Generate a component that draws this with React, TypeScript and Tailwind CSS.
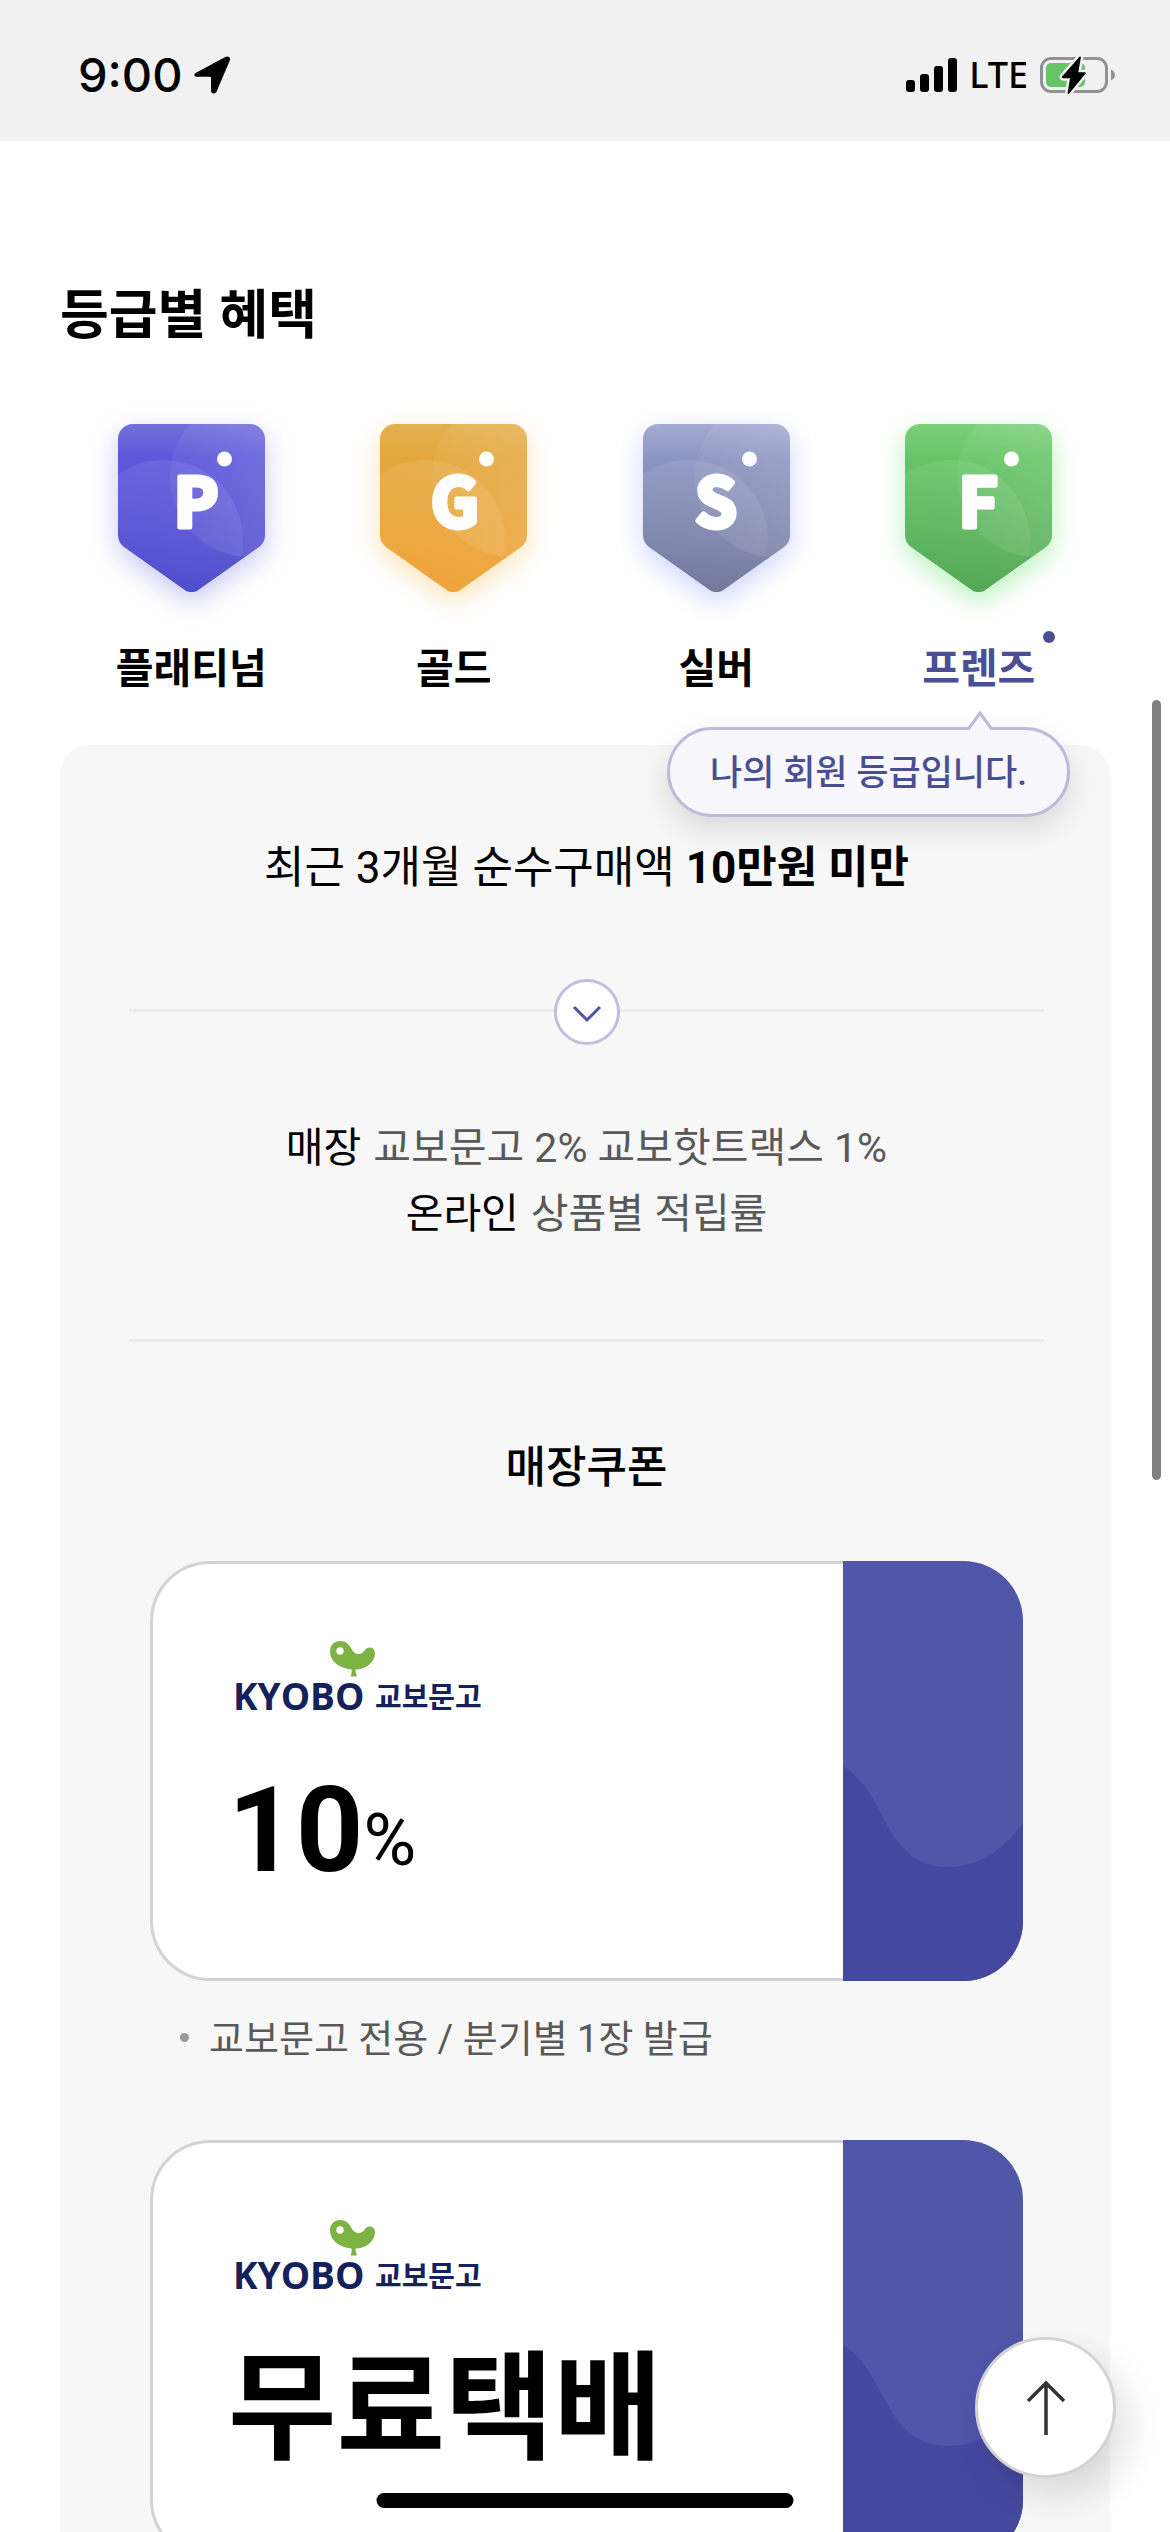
import { useState } from "react";

interface Grade {
  id: string;
  letter: string;
  letterX: number;
  name: string;
  top: string;
  mid: string;
  bottom: string;
  glow: string;
}

const GRADES: Grade[] = [
  {
    id: "platinum",
    letter: "P",
    letterX: 78,
    name: "플래티넘",
    top: "#746fda",
    mid: "#5d57da",
    bottom: "#4f4ccd",
    glow: "drop-shadow-[0_9px_13px_rgba(91,86,216,0.32)]",
  },
  {
    id: "gold",
    letter: "G",
    letterX: 75,
    name: "골드",
    top: "#e2b14f",
    mid: "#e4a73c",
    bottom: "#f0a338",
    glow: "drop-shadow-[0_9px_13px_rgba(240,180,60,0.36)]",
  },
  {
    id: "silver",
    letter: "S",
    letterX: 73,
    name: "실버",
    top: "#a4abd1",
    mid: "#8c95c2",
    bottom: "#72779b",
    glow: "drop-shadow-[0_9px_13px_rgba(120,140,250,0.36)]",
  },
  {
    id: "friends",
    letter: "F",
    letterX: 73,
    name: "프렌즈",
    top: "#7dd07c",
    mid: "#65c565",
    bottom: "#52a653",
    glow: "drop-shadow-[0_9px_13px_rgba(90,220,100,0.42)]",
  },
];

const MY_GRADE = "friends";

const COUPONS = [
  { id: "rate", value: "10", unit: "%", note: "교보문고 전용 / 분기별 1장 발급" },
  { id: "delivery", value: "무료택배", unit: "", note: "" },
];

function StatusBar() {
  return (
    <header className="flex h-[141px] shrink-0 items-center justify-between bg-[#f1f1f1] pr-[54px] pl-[78px] text-black">
      <div className="flex items-center gap-[11px] pt-2">
        <span className="font-['Inter',sans-serif] text-[47px] leading-[60px] font-medium">9:00</span>
        <svg width="37" height="38" viewBox="0 0 37 38" aria-hidden>
          <path
            d="M3 16.300 31.300 1.100C34.500-.5 37 1.700 35.700 4.700L22.600 35.500C21.300 38.600 17 38 17 34.600V21.600C17 21 16.800 20.800 16.200 20.800H3.600C-.5 20.800-.9 18 3 16.300Z"
            fill="#000"
          />
        </svg>
      </div>

      <div className="flex items-center gap-3 pt-2">
        <svg width="51" height="34" viewBox="0 0 51 34" aria-hidden>
          <rect x="0" y="22" width="9" height="12" rx="3" />
          <rect x="14" y="16" width="9" height="18" rx="3" />
          <rect x="28" y="8" width="9" height="26" rx="3" />
          <rect x="42" y="0" width="9" height="34" rx="3" />
        </svg>
        <span className="font-['Noto_Sans',sans-serif] text-[36px] leading-[60px] font-medium">LTE</span>
        <svg width="76" height="38" viewBox="0 0 76 38" aria-hidden>
          <rect x="1.500" y="2.500" width="65" height="33" rx="9.500" fill="none" stroke="#929294" strokeWidth="3" />
          <path d="M71 13.500C73.500 14.500 75 16.500 75 19S73.500 23.500 71 24.500Z" fill="#929294" />
          <rect x="6" y="7" width="39" height="24" rx="5" fill="#67c466" />
          <path
            d="M39.500 .8 22.300 20.300C21.500 21.300 22 22.200 23 22.200H30L27.600 36.800C27.500 37.900 28.400 38.300 29.200 37.400L45.500 17.800C46.200 16.900 45.800 16.200 44.700 16.200H38.300L40.800 2C41 .6 40.300 0 39.500 .8Z"
            fill="#000"
            stroke="#f1f1f1"
            strokeWidth="5"
            paintOrder="stroke"
          />
        </svg>
      </div>
    </header>
  );
}

function GradeBadge({ grade }: { grade: Grade }) {
  const fill = `fill-${grade.id}`;
  const shine = `shine-${grade.id}`;
  const side = `side-${grade.id}`;
  const clip = `clip-${grade.id}`;

  return (
    <svg width="147" height="168" viewBox="0 0 147 168" className={grade.glow} aria-hidden>
      <defs>
        <linearGradient id={fill} x1="0" y1="0" x2="0" y2="1">
          <stop offset="0" stopColor={grade.top} />
          <stop offset="0.2" stopColor={grade.mid} />
          <stop offset="1" stopColor={grade.bottom} />
        </linearGradient>
        <linearGradient id={shine} x1="0.6" y1="0" x2="0.3" y2="1">
          <stop offset="0" stopColor="#fff" stopOpacity="0.09" />
          <stop offset="0.45" stopColor="#fff" stopOpacity="0.05" />
          <stop offset="0.8" stopColor="#fff" stopOpacity="0" />
        </linearGradient>
        <linearGradient id={side} x1="0" y1="0" x2="0.6" y2="0">
          <stop offset="0" stopColor="#fff" stopOpacity="0.05" />
          <stop offset="1" stopColor="#fff" stopOpacity="0.13" />
        </linearGradient>
        <clipPath id={clip}>
          <path d="M15 0H132C140.300 0 147 6.700 147 15V111C147 116 145 120 141 123L81 165.500C76.500 169 70.500 169 66 165.500L6 123C2 120 0 116 0 111V15C0 6.700 6.700 0 15 0Z" />
        </clipPath>
      </defs>
      <g clipPath={`url(#${clip})`}>
        <rect width="147" height="168" fill={`url(#${fill})`} />
        <circle cx="45" cy="116" r="80" fill={`url(#${shine})`} />
        <circle cx="132" cy="53" r="80" fill={`url(#${side})`} />
      </g>
      <circle cx="106.500" cy="35" r="7.500" fill="#fff" />
      <text
        x={grade.letterX}
        y="103"
        textAnchor="middle"
        fill="#fff"
        stroke="#fff"
        strokeWidth="5"
        strokeLinejoin="round"
        className="font-['Noto_Sans_CJK_KR',sans-serif] text-[67px] font-bold"
      >
        {grade.letter}
      </text>
    </svg>
  );
}

function MyGradeTooltip() {
  return (
    <div
      role="tooltip"
      className="absolute top-full right-10 z-10 mt-7 rounded-full border-[3px] border-[#bbbbdb] bg-[#f8f7fd] px-10 pt-[14px] pb-[10px] shadow-[0_12px_30px_rgba(0,0,0,0.12)]"
    >
      <svg className="absolute -top-5 right-[73px]" width="28" height="22" viewBox="0 0 28 22" aria-hidden>
        <path d="M2 20.500 14 3 26 20.500V22H2Z" fill="#f8f7fd" />
        <path d="M2 19.500 14 3 26 19.500" fill="none" stroke="#bbbbdb" strokeWidth="3" />
      </svg>
      <p className="text-[35px] leading-[60px] font-medium whitespace-nowrap text-[#4a4e92]">나의 회원 등급입니다.</p>
    </div>
  );
}

function GradeTabs({ selected, onSelect }: { selected: string; onSelect: (id: string) => void }) {
  return (
    <div className="mt-[72px] grid grid-cols-4">
      {GRADES.map((grade) => (
        <div key={grade.id} className="relative">
          <button
            type="button"
            aria-pressed={selected === grade.id}
            onClick={() => onSelect(grade.id)}
            className="flex w-full flex-col items-center gap-[47px]"
          >
            <GradeBadge grade={grade} />
            <span
              className={
                selected === grade.id
                  ? "relative text-[41px] leading-[60px] font-bold text-[#4a4e92]"
                  : "text-[41px] leading-[60px] font-bold text-black"
              }
            >
              {grade.name}
              {selected === grade.id && <i className="absolute -top-2 -right-5 size-3 rounded-full bg-[#4a4e92]" />}
            </span>
          </button>
          {grade.id === MY_GRADE && <MyGradeTooltip />}
        </div>
      ))}
    </div>
  );
}

function KyoboLogo() {
  return (
    <svg width="266" height="84" viewBox="-8 0 266 84" role="img" aria-label="KYOBO 교보문고">
      <path
        d="M94 10.500C94 4 98.500 0 104 0C110 0 113 3.500 115.500 8C117.500 11.500 119.500 13 122.500 13C126 13 127.500 11 129 9C130.500 7.200 132 6.500 134 6.500C137 6.500 139 9 139 12.500C139 21 130 28.500 119.500 28.600C119.500 31 120 33 121 35.500H114.500C115.500 33 116 31 115.500 28.400C103 27.500 94 20 94 10.500Z"
        fill="#7db343"
      />
      <circle cx="104" cy="10" r="3.700" fill="#fff" />
      <text x="-3" y="69" fill="#15215b" className="font-['Open_Sans',sans-serif] text-[37px] font-bold">
        KYOBO
      </text>
      <text x="139" y="67" fill="#15215b" className="font-['Noto_Sans_CJK_KR',sans-serif] text-[29px] font-bold">
        교보문고
      </text>
    </svg>
  );
}

function Coupon({ value, unit }: { value: string; unit: string }) {
  return (
    <article className="flex h-[420px]">
      <div className="flex flex-1 flex-col items-start gap-[46px] rounded-l-[60px] border-[3px] border-r-0 border-[#d3d3d3] bg-white pt-[77px] pl-[75px]">
        <KyoboLogo />
        <p className="flex items-end text-black">
          <strong className="text-[118px] leading-[120px] font-bold">{value}</strong>
          {unit && <span className="text-[72px] leading-[100px]">{unit}</span>}
        </p>
      </div>
      <div className="w-[180px] overflow-hidden rounded-r-[60px] bg-[#5056a8]">
        <svg width="180" height="420" viewBox="0 0 180 420" aria-hidden>
          <path d="M0 205C45 232 40 305 105 306C137 306 160 288 180 263V420H0Z" fill="#45489f" />
        </svg>
      </div>
    </article>
  );
}

export default function App() {
  const [selected, setSelected] = useState(MY_GRADE);

  return (
    <div className="flex h-screen flex-col overflow-hidden bg-white font-['Roboto','Noto_Sans_CJK_KR',sans-serif] text-black">
      <StatusBar />

      <main className="min-h-0 flex-1 overflow-hidden px-[60px] pt-[139px]">
        <h1 className="text-[53px] leading-[72px] font-bold">등급별 혜택</h1>
        <GradeTabs selected={selected} onSelect={setSelected} />

        <section className="mt-[46px] rounded-t-[30px] bg-[#f7f7f7] pt-[90px] pr-[66px] pb-[90px] pl-[69px] text-center">
          <p className="text-[44px] leading-[66px]">
            최근 3개월 순수구매액 <strong className="font-bold">10만원 미만</strong>
          </p>

          <div className="relative mt-[108px] border-t-[3px] border-[#ebebeb]">
            <span className="absolute top-0 left-1/2 flex size-[66px] -translate-x-1/2 -translate-y-1/2 items-center justify-center rounded-full border-[3px] border-[#bfbfde] bg-white">
              <svg width="30" height="18" viewBox="0 0 30 18" className="mt-1" aria-hidden>
                <path d="M2 2 15 15 28 2" fill="none" stroke="#5055a6" strokeWidth="3" />
              </svg>
            </span>
          </div>

          {/* Earning rates */}
          <dl className="mt-[103px] text-[41px] leading-[66px] text-[#595959]">
            <div className="flex justify-center gap-3">
              <dt className="text-black">매장</dt>
              <dd>교보문고 2% 교보핫트랙스 1%</dd>
            </div>
            <div className="flex justify-center gap-3">
              <dt className="text-black">온라인</dt>
              <dd>상품별 적립률</dd>
            </div>
          </dl>

          <hr className="mt-[92px] border-t-[3px] border-[#ebebeb]" />

          <h2 className="mt-[93px] text-[44px] leading-[66px] font-medium">매장쿠폰</h2>
          <ul className="mt-[60px] flex flex-col gap-[71px] px-[21px] text-left">
            {COUPONS.map((coupon) => (
              <li key={coupon.id}>
                <Coupon value={coupon.value} unit={coupon.unit} />
                {coupon.note && (
                  <p className="mt-[28px] flex items-center gap-5 pl-[30px] text-[38px] leading-[60px] text-[#595959]">
                    <i className="mb-1 size-[9px] rounded-full bg-[#999999]" />
                    {coupon.note}
                  </p>
                )}
              </li>
            ))}
          </ul>
        </section>
      </main>

      {/* Overlays */}
      <div className="fixed top-[700px] right-[9px] h-[780px] w-[9px] rounded-full bg-[#808080]" aria-hidden />
      <button
        type="button"
        aria-label="맨 위로"
        className="fixed right-[54px] bottom-[54px] z-20 flex size-[141px] items-center justify-center rounded-full border-[3px] border-[#d3d3d3] bg-white shadow-[12px_18px_36px_rgba(0,0,0,0.12)]"
      >
        <svg width="40" height="56" viewBox="0 0 40 56" aria-hidden>
          <path d="M20 55V3M2 21 20 3 38 21" fill="none" stroke="#333" strokeWidth="3.500" />
        </svg>
      </button>
      <div className="fixed bottom-6 left-1/2 z-30 h-[15px] w-[417px] -translate-x-1/2 rounded-full bg-black" aria-hidden />
    </div>
  );
}
